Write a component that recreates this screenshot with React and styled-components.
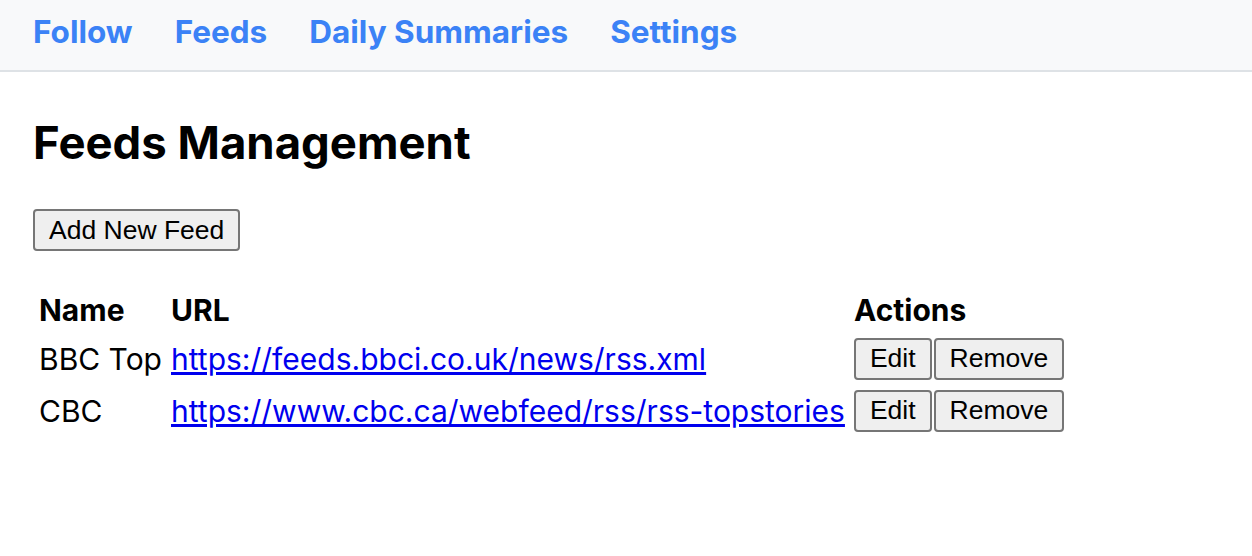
import React from 'react';
import styled, { createGlobalStyle } from 'styled-components';

const GlobalStyle = createGlobalStyle`
  body {
    margin: 0;
    background: #fff;
    font-family: Inter, "Liberation Sans", sans-serif;
    color: #000;
  }
`;

const feeds = [
  { name: 'BBC Top', url: 'https://feeds.bbci.co.uk/news/rss.xml' },
  { name: 'CBC', url: 'https://www.cbc.ca/webfeed/rss/rss-topstories' },
];

export default function App() {
  return (
    <>
      <GlobalStyle />
      <NavBar>
        <NavLink href="#">Follow</NavLink>
        <NavLink href="#">Feeds</NavLink>
        <NavLink href="#">Daily Summaries</NavLink>
        <NavLink href="#">Settings</NavLink>
      </NavBar>
      <Main>
        <Title>Feeds Management</Title>
        <Toolbar>
          <Button>Add New Feed</Button>
        </Toolbar>
        <Table>
          <thead>
            <tr>
              <Th>Name</Th>
              <Th>URL</Th>
              <Th>Actions</Th>
            </tr>
          </thead>
          <tbody>
            {feeds.map(feed => (
              <tr key={feed.name}>
                <Td>{feed.name}</Td>
                <Td><FeedLink href={feed.url}>{feed.url}</FeedLink></Td>
                <Td>
                  <Button>Edit</Button>
                  <Button>Remove</Button>
                </Td>
              </tr>
            ))}
          </tbody>
        </Table>
      </Main>
    </>
  )
}

const NavBar = styled.nav`
  height: 58px;
  display: flex;
  align-items: flex-start;
  gap: 42px;
  padding: 12px 33px 0;
  background-color: #f8f9fa;
  border-bottom: 2px solid #dee2e6;
`

const NavLink = styled.a`
  font-size: 31.5px;
  line-height: normal;
  font-weight: 700;
  color: #3b82f6;
  text-decoration: none;
`

const Main = styled.main`
  padding: 0 33px;
`

const Title = styled.h1`
  font-size: 45.5px;
  font-weight: 700;
  line-height: 54px;
  margin: 44px 0 39px;
`

const Toolbar = styled.div`
  margin-bottom: 34px;
`

const Button = styled.button`
  font-family: "Liberation Sans", Arial, sans-serif;
  font-size: 26.5px;
  height: 42px;
  padding: 0 14px;
  background-color: #efefef;
  border: 2px solid #767676;
  border-radius: 4px;
  color: #000;
  margin: 0 2px 0 0;
  vertical-align: middle;
`

const Table = styled.table`
  border-spacing: 3px;
  font-size: 30px;
`

const Th = styled.th`
  text-align: left;
  font-weight: 700;
  padding: 3.5px 3px;
`

const Td = styled.td`
  padding: 3.5px 3px;
  white-space: nowrap;
`

const FeedLink = styled.a`
  color: #0000ee;
  text-decoration: underline;
`
